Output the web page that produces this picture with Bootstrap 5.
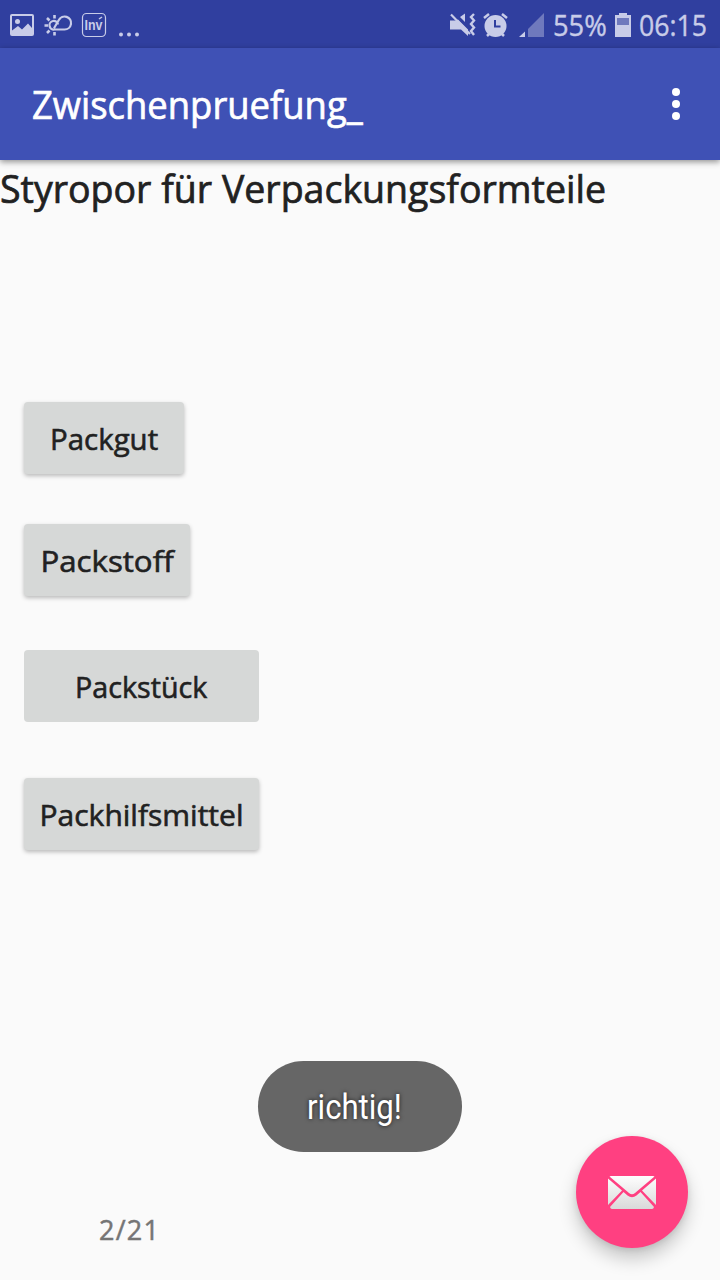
<!DOCTYPE html>
<html lang="de">
<head>
<meta charset="utf-8">
<meta name="viewport" content="width=device-width, initial-scale=1">
<title>Zwischenpruefung_</title>
<link href="https://cdn.jsdelivr.net/npm/bootstrap@5.3.0/dist/css/bootstrap.min.css" rel="stylesheet">
<style>
body{width:720px;height:1280px;overflow:hidden;background:#fafafa;color:#212121;font-family:"Open Sans","Noto Sans",sans-serif;font-weight:500}
.statusbar{height:48px;background:#303f9f;color:#c8cce8;font-size:30px;line-height:50px;font-weight:400;-webkit-text-stroke:.4px}
.statusbar svg{display:block;flex:none;-webkit-text-stroke:0}
.appbar{height:112px;background:#3f51b5;color:#fff;box-shadow:0 2px 6px rgba(0,0,0,.42);padding:0 36px 0 32px;z-index:2}
.fit{display:inline-block;white-space:nowrap;transform-origin:0 50%}
.title{font-size:38px;line-height:52px;transform:scaleX(.958);-webkit-text-stroke:.7px}
.question{font-size:38px;line-height:52px;height:52px;margin-top:2px;-webkit-text-stroke:.7px}
.question .fit{transform:scaleX(.987)}
.answers{margin:188px 0 0 24px}
.answer{height:72px;border:0;border-radius:4px;background:#d6d8d7;color:#212121;font-size:30px;line-height:40px;font-weight:500;padding:2px 0 0;box-shadow:0 2px 4px rgba(0,0,0,.26);-webkit-text-stroke:.6px}
.answer .fit{transform-origin:50% 50%}
.flat{box-shadow:none}
.bubble{left:258px;top:1061px;width:204px;height:91px;border-radius:46px;background:#666;color:#fff;padding:3px 0 0 49px;font:400 35px/48px Roboto,sans-serif;text-shadow:0 0 5px rgba(0,0,0,.75)}
.bubble .fit{transform:scaleX(.89)}
.counter{left:99px;top:1210px;font-size:27px;line-height:40px;color:#757575;letter-spacing:1.2px;-webkit-text-stroke:.5px}
.fab{left:576px;top:1136px;width:112px;height:112px;background:#ff4081;box-shadow:0 11px 18px rgba(0,0,0,.2),0 2px 6px rgba(0,0,0,.1)}
</style>
</head>
<body class="d-flex flex-column position-relative">
<header class="statusbar d-flex position-relative">
  <svg width="150" height="48" fill="none" stroke="#c8cce8">
    <path d="M12 14h20q2 0 2 2v18q0 2-2 2H12q-2 0-2-2V16q0-2 2-2z" fill="#c8cce8" stroke="none"/>
    <path d="M12 16h20v12l-4-4.500-6 6-4-3.500-6 4.500z" fill="#303f9f" stroke="none"/><circle cx="17.500" cy="21.500" r="2.500" fill="#c8cce8" stroke="none"/>
    <path d="M56 29.500h8.500a6.500 6.500 0 1 0-5.700-9.500L54 28.300M58 24.500a4.300 4.300 0 1 0-3.500 5h4" stroke-width="2.200"/>
    <path d="M54.500 15v3.500M54.500 32v3.500M44.500 25.500H48M47 18l2.500 2.500M47 33l2.500-2.500" stroke-width="2.600"/>
    <rect x="82.500" y="13.500" width="23" height="23" rx="4" stroke-width="1.200"/>
    <text x="84.500" y="30" font-family="Liberation Sans" font-size="14" font-weight="700" textLength="18" lengthAdjust="spacingAndGlyphs" fill="#c8cce8" stroke="none">Inv</text><path d="M99 19l3-2" stroke-width="1.500"/>
    <g fill="#c8cce8" stroke="none"><circle cx="121" cy="34.500" r="2"/><circle cx="129" cy="34.500" r="2"/><circle cx="137" cy="34.500" r="2"/></g>
  </svg>
  <svg class="ms-auto" width="106" height="48" viewBox="447 0 106 48" fill="#c8cce8">
    <path d="M450 20.500h6l2-1 10 10V36l-7-6.500h-11zM460 17l5-3.500V22z"/>
    <path d="M451 14.500L470 34" stroke="#c8cce8" stroke-width="2.200"/>
    <path d="M474 14l-3 3 3 3.500-3 3.500 3 3.500-3 3.500 3 4" fill="none" stroke="#c8cce8" stroke-width="2.400"/>
    <circle cx="495.500" cy="26" r="11"/><path d="M484 18l5-4M507 18l-5-4M487 36l4-4M504 36l-4-4" stroke="#c8cce8" stroke-width="2.500"/>
    <path d="M495 20v6.500h5.500" fill="none" stroke="#303f9f" stroke-width="2"/>
    <path d="M519 37l6-5.500V37z"/><path d="M528 37V29l16-16v24z" fill="#6f79bd"/>
  </svg>
  <span class="fit" style="width:62px"><span class="fit" style="transform:scaleX(.91)">55%</span></span>
  <svg width="24" height="48" viewBox="615 0 24 48"><path d="M615 15h4v-2h8v2h4v22h-16z" fill="#c8cce8"/><path d="M617 18h12v7h-12z" fill="#6f79bd"/></svg>
  <span class="fit" style="width:81px"><span class="fit" style="transform:scaleX(.89)">06:15</span></span>
</header>
<nav class="appbar d-flex align-items-center justify-content-between position-relative">
  <span class="title fit">Zwischenpruefung_</span>
  <svg width="16" height="112" viewBox="0 0 16 112" fill="#fff"><circle cx="8" cy="44" r="4"/><circle cx="8" cy="56" r="4"/><circle cx="8" cy="68" r="4"/></svg>
</nav>
<main>
  <div class="question"><span class="fit">Styropor für Verpackungsformteile</span></div>
  <div class="answers d-flex flex-column align-items-start">
    <button class="btn answer" style="width:160px"><span class="fit" style="transform:scaleX(.98)">Packgut</span></button>
    <button class="btn answer" style="width:166px;margin-top:50px"><span class="fit" style="transform:scaleX(1.04)">Packstoff</span></button>
    <button class="btn answer flat" style="width:235px;margin-top:54px"><span class="fit" style="transform:scaleX(.955)">Packstück</span></button>
    <button class="btn answer" style="width:235px;margin-top:56px"><span class="fit">Packhilfsmittel</span></button>
  </div>
</main>
<div class="bubble position-absolute d-flex align-items-center"><span class="fit">richtig!</span></div>
<span class="counter position-absolute fit">2/21</span>
<button class="fab btn border-0 rounded-circle position-absolute p-0 d-flex align-items-center justify-content-center" aria-label="Nachricht">
  <svg width="48" height="34" viewBox="0 0 48 34"><defs><linearGradient id="paper" gradientUnits="userSpaceOnUse" x1="0" y1="0" x2="0" y2="34"><stop stop-color="#fff"/><stop offset="1" stop-color="#d9d9d9"/></linearGradient></defs>
  <path d="M3 1h42q1 0 1.500.5L27 18q-3 2.500-6 0L1.500 1.500Q2 1 3 1zM0 3.500L14 15.500 0 30zM48 3.500V30L34 15.500zM15.500 17l4 3.500q4.500 3.500 9 0l4-3.500L46 32q-.5 2-2 2H4q-1.500 0-2-2z" fill="url(#paper)"/></svg>
</button>
<script src="https://cdn.jsdelivr.net/npm/bootstrap@5.3.0/dist/js/bootstrap.bundle.min.js"></script>
</body>
</html>
